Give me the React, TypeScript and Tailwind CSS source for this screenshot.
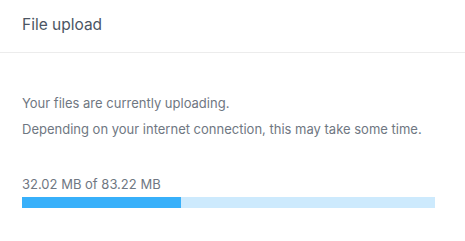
export default function App() {
  const loaded = 32.02;
  const total = 83.22;
  const pct = (loaded / total) * 100;

  return (
    <div className="w-[465px] h-[241px] bg-white font-['Inter',sans-serif]">
      <div className="h-[53px] px-[22px] pt-[13px] border-b border-[#ececec]">
        <h2 className="text-[15.5px] leading-[24px] font-normal text-[#4b5563]">File upload</h2>
      </div>
      <div className="px-[22px] pt-[41px]">
        <p className="text-[13px] leading-[18px] text-[#6f7782]">Your files are currently uploading.</p>
        <p className="mt-[8px] text-[13px] leading-[18px] text-[#6f7782]">
          Depending on your internet connection, this may take some time.
        </p>
        <div className="mt-[37px]">
          <div className="text-[13px] leading-[18px] text-[#6f7782]">
            {loaded.toFixed(2)} MB of {total.toFixed(2)} MB
          </div>
          <div className="mt-[4px] w-[413px] h-[11px] bg-[#cdeafd]">
            <div className="h-full bg-[#38b0fa]" style={{ width: `${pct}%` }} />
          </div>
        </div>
      </div>
    </div>
  );
}
